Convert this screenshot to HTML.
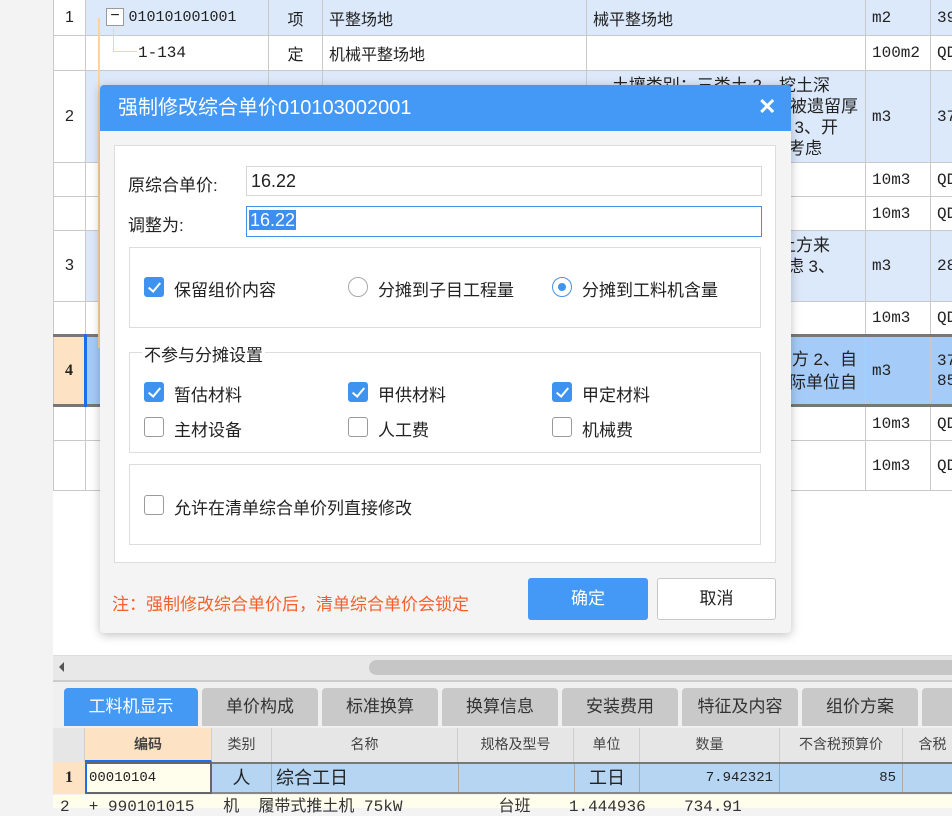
<!DOCTYPE html>
<html><head><meta charset="utf-8">
<style>
*{margin:0;padding:0;box-sizing:border-box}
body{width:952px;height:808px;overflow:hidden;background:#f3f3f3;position:relative;font-family:"Liberation Sans","Noto Sans CJK SC",sans-serif;font-size:16px;color:#222}
.a{position:absolute}
table.g{position:absolute;left:53px;top:-1px;border-collapse:collapse;table-layout:fixed;width:910px;background:#fff}
table.g td{border:1px solid #c9c9c9;padding:0 6px;font-size:16px;color:#222;white-space:nowrap;overflow:hidden;vertical-align:middle}
tr.b td{background:#dce9fb}
tr.s td{background:#a5cbf8}
td.n{text-align:center;background:#fff!important;padding:0}
.mono{font-family:"Liberation Mono","Noto Sans CJK SC",monospace;font-size:14px}
.cb{position:absolute;width:20px;height:20px;border:1px solid #9a9a9a;border-radius:3px;background:#fff}
.cb.on{background:#3f93f0;border-color:#3f93f0}
.cb.on:after{content:"";position:absolute;left:6px;top:2px;width:5px;height:10px;border:solid #fff;border-width:0 2.5px 2.5px 0;transform:rotate(40deg)}
.lb{position:absolute;font-size:17px;color:#222}
.tab{position:absolute;top:688px;height:38px;background:#c9c9c9;border-radius:4px 4px 0 0;text-align:center;line-height:38px;font-size:17px;color:#333}
.hc{position:absolute;top:728px;height:34px;border-right:1px solid #cfcfcf;text-align:center;line-height:32px;font-size:14px;color:#444;background:#e6e6e6}
.tx{padding:0!important;vertical-align:middle}
.tx div{text-align:right;line-height:21px;font-size:17px}
</style></head><body>
<div class="a" style="left:53px;top:0;width:899px;height:655px;background:#fff"></div>
<table class="g">
<colgroup><col style="width:32px"><col style="width:183px"><col style="width:54px"><col style="width:264px"><col style="width:279px"><col style="width:65px"><col style="width:33px"></colgroup>
<tr class="b" style="height:36px"><td class="n">1</td><td style="padding-left:8px"><span style="display:inline-block;width:18px;height:18px;border:1px solid #999;vertical-align:middle;text-align:center;line-height:14px;margin-left:12px;background:#fff">−</span> <span class="mono" style="font-size:15px">010101001001</span></td><td style="text-align:center">项</td><td>平整场地</td><td>械平整场地</td><td class="mono">m2</td><td class="mono">39</td></tr>
<tr style="height:35px"><td class="n"></td><td style="padding-left:52px" class="mono">1-134</td><td style="text-align:center">定</td><td>机械平整场地</td><td></td><td class="mono">100m2</td><td class="mono">QD</td></tr>
<tr class="b" style="height:92px"><td class="n">2</td><td></td><td></td><td></td><td class="tx"><div style="padding-right:35px">土壤类别：三类土 2、挖土深</div><div style="padding-right:7px">度：按设计，放坡被遗留厚</div><div style="padding-right:27px">度：综合考虑 0 &nbsp;3、开</div><div style="padding-right:43px">挖方式：综合考虑</div></td><td class="mono">m3</td><td class="mono">37</td></tr>
<tr style="height:34px"><td class="n"></td><td></td><td></td><td></td><td></td><td class="mono">10m3</td><td class="mono">QD</td></tr>
<tr style="height:34px"><td class="n"></td><td></td><td></td><td></td><td></td><td class="mono">10m3</td><td class="mono">QD</td></tr>
<tr class="b" style="height:71px"><td class="n">3</td><td></td><td></td><td></td><td class="tx"><div style="padding-right:35px">1、土方来源：综合考虑土方来</div><div style="padding-right:30px">2、运距：综合考虑考虑 3、</div><div>&nbsp;</div></td><td class="mono">m3</td><td class="mono">28</td></tr>
<tr style="height:34px"><td class="n"></td><td></td><td></td><td></td><td></td><td class="mono">10m3</td><td class="mono">QD</td></tr>
<tr class="s" style="height:70px;border-top:3px solid #777;border-bottom:3px solid #777"><td class="n" style="background:#fde3c4!important;font-weight:bold;font-family:'Liberation Serif',serif">4</td><td style="border-left:3px solid #1a6ff0"></td><td></td><td></td><td class="tx"><div style="padding-right:8px;line-height:23px">1、废弃料品种：综合考虑方 2、自</div><div style="padding-right:8px;line-height:23px">2、运距：由投标单位实际单位自</div></td><td class="mono">m3</td><td class="mono" style="line-height:20px;white-space:normal">37<br>85</td></tr>
<tr style="height:35px"><td class="n"></td><td></td><td></td><td></td><td></td><td class="mono">10m3</td><td class="mono">QD</td></tr>
<tr style="height:50px"><td class="n"></td><td></td><td></td><td></td><td></td><td class="mono">10m3</td><td class="mono">QD</td></tr>
</table>
<div class="a" style="left:98px;top:18px;width:2px;height:330px;background:#fcd3a0"></div>
<div class="a" style="left:113px;top:28px;width:1px;height:24px;background:#fcd3a0"></div>
<div class="a" style="left:113px;top:51px;width:24px;height:1px;background:#fcd3a0"></div>

<div class="a" style="left:53px;top:655px;width:899px;height:27px;background:#e8e8e8;border-top:1px solid #ddd;border-bottom:2px solid #ccc"></div>
<div class="a" style="left:59px;top:662px;width:0;height:0;border-top:5px solid transparent;border-bottom:5px solid transparent;border-right:5px solid #555"></div>
<div class="a" style="left:369px;top:660px;width:600px;height:15px;background:#c6c6c6;border-radius:8px"></div>
<div class="a" style="left:53px;top:682px;width:899px;height:46px;background:#f0f0f0"></div>
<div class="tab" style="left:64px;width:134px;background:#4499f5;color:#fff">工料机显示</div>
<div class="tab" style="left:202px;width:116px">单价构成</div>
<div class="tab" style="left:322px;width:116px">标准换算</div>
<div class="tab" style="left:442px;width:116px">换算信息</div>
<div class="tab" style="left:562px;width:116px">安装费用</div>
<div class="tab" style="left:682px;width:116px">特征及内容</div>
<div class="tab" style="left:802px;width:116px">组价方案</div>
<div class="tab" style="left:922px;width:40px"></div>
<div class="a" style="left:53px;top:728px;width:899px;height:34px;background:#e6e6e6;border-bottom:1px solid #cfcfcf"></div>
<div class="hc" style="left:53px;width:32px"></div>
<div class="hc" style="left:85px;width:127px;background:#fde3c4;font-weight:bold;border-bottom:2px solid #1a6ff0">编码</div>
<div class="hc" style="left:212px;width:60px">类别</div>
<div class="hc" style="left:272px;width:186px">名称</div>
<div class="hc" style="left:458px;width:116px">规格及型号</div>
<div class="hc" style="left:574px;width:66px">单位</div>
<div class="hc" style="left:640px;width:140px">数量</div>
<div class="hc" style="left:780px;width:123px">不含税预算价</div>
<div class="hc" style="left:903px;width:60px">含税</div>
<div class="a" style="left:53px;top:762px;width:899px;height:32px;background:#b5d5f3;border-top:2px solid #777;border-bottom:2px solid #888"></div>
<div class="a" style="left:53px;top:762px;width:32px;height:32px;background:#fde3c4;text-align:center;line-height:32px;font-family:'Liberation Serif',serif;font-weight:bold;font-size:16px">1</div>
<div class="a mono" style="left:85px;top:762px;width:127px;height:32px;background:#fffdeb;border:2px solid #666;border-left:2px solid #1a6ff0;line-height:28px;padding-left:2px">00010104</div>
<div class="a" style="left:212px;top:764px;width:60px;height:28px;text-align:center;line-height:28px;font-size:18px;border-right:1px solid #aaa">人</div>
<div class="a" style="left:276px;top:764px;line-height:28px;font-size:18px">综合工日</div>
<div class="a" style="left:458px;top:764px;width:1px;height:28px;background:#aaa"></div>
<div class="a" style="left:574px;top:764px;width:66px;height:28px;text-align:center;line-height:28px;font-size:18px;border-left:1px solid #aaa;border-right:1px solid #aaa">工日</div>
<div class="a mono" style="left:640px;top:764px;width:140px;height:28px;text-align:right;line-height:28px;padding-right:6px;border-right:1px solid #aaa">7.942321</div>
<div class="a mono" style="left:780px;top:764px;width:123px;height:28px;text-align:right;line-height:28px;padding-right:6px;border-right:1px solid #aaa">85</div>
<div class="a" style="left:53px;top:795px;width:899px;height:13px;background:#fffdeb"></div>
<div class="a mono" style="left:60px;top:799px;font-size:16px;line-height:16px;color:#333">2 &nbsp;+ 990101015 &nbsp;&nbsp;机 &nbsp;履带式推土机 75kW &nbsp;&nbsp;&nbsp;&nbsp;&nbsp;&nbsp;&nbsp;&nbsp;&nbsp;台班 &nbsp;&nbsp;&nbsp;1.444936 &nbsp;&nbsp;&nbsp;734.91</div>

<div class="a" style="left:100px;top:85px;width:691px;height:548px;background:#f4f4f4;border-radius:4px;box-shadow:0 2px 10px rgba(0,0,0,.25);overflow:hidden">
 <div class="a" style="left:0;top:0;width:691px;height:46px;background:#4599f6"></div>
 <div class="a" style="left:18px;top:10px;color:#fff;font-size:20px;line-height:26px">强制修改综合单价010103002001</div>
 <div class="a" style="left:658px;top:8px;color:#fff;font-size:22px;font-weight:bold;line-height:28px">✕</div>
 <div class="a" style="left:14px;top:60px;width:662px;height:418px;background:#fff;border:1px solid #ddd"></div>
 <div class="lb" style="left:28px;top:86px">原综合单价:</div>
 <div class="a" style="left:146px;top:81px;width:516px;height:30px;border:1px solid #d6d6d6;background:#fff;font-size:18px;line-height:28px;padding-left:4px">16.22</div>
 <div class="lb" style="left:28px;top:126px">调整为:</div>
 <div class="a" style="left:146px;top:121px;width:516px;height:31px;border:1.5px solid #4a90e8;background:#fff;font-size:18px;line-height:27px;padding-left:2px"><span style="background:#3d8ef0;color:#fff;padding:0 1px">16.22</span></div>
 <div class="a" style="left:29px;top:162px;width:632px;height:81px;border:1px solid #ddd"></div>
 <div class="cb on" style="left:44px;top:192px"></div><div class="lb" style="left:74px;top:191px">保留组价内容</div>
 <div class="a" style="left:248px;top:192px;width:20px;height:20px;border:1px solid #aaa;border-radius:50%;background:#fff"></div><div class="lb" style="left:278px;top:191px">分摊到子目工程量</div>
 <div class="a" style="left:452px;top:192px;width:20px;height:20px;border:1px solid #4a90e8;border-radius:50%;background:#fff"><div class="a" style="left:5px;top:5px;width:8px;height:8px;border-radius:50%;background:#3f93f0"></div></div><div class="lb" style="left:482px;top:191px">分摊到工料机含量</div>
 <div class="a" style="left:29px;top:267px;width:632px;height:101px;border:1px solid #ddd"></div>
 <div class="lb" style="left:42px;top:256px;background:#fff;padding:0 2px">不参与分摊设置</div>
 <div class="cb on" style="left:44px;top:297px"></div><div class="lb" style="left:74px;top:296px">暂估材料</div>
 <div class="cb on" style="left:248px;top:297px"></div><div class="lb" style="left:278px;top:296px">甲供材料</div>
 <div class="cb on" style="left:452px;top:297px"></div><div class="lb" style="left:482px;top:296px">甲定材料</div>
 <div class="cb" style="left:44px;top:332px"></div><div class="lb" style="left:74px;top:331px">主材设备</div>
 <div class="cb" style="left:248px;top:332px"></div><div class="lb" style="left:278px;top:331px">人工费</div>
 <div class="cb" style="left:452px;top:332px"></div><div class="lb" style="left:482px;top:331px">机械费</div>
 <div class="a" style="left:29px;top:379px;width:632px;height:81px;border:1px solid #ddd"></div>
 <div class="cb" style="left:44px;top:410px"></div><div class="lb" style="left:74px;top:409px">允许在清单综合单价列直接修改</div>
 <div class="a" style="left:12px;top:505px;color:#f5602a;font-size:17px">注：强制修改综合单价后，清单综合单价会锁定</div>
 <div class="a" style="left:428px;top:493px;width:120px;height:42px;background:#4599f6;border-radius:3px;color:#fff;text-align:center;line-height:42px;font-size:17px">确定</div>
 <div class="a" style="left:557px;top:493px;width:119px;height:42px;background:#fff;border:1px solid #c8c8c8;border-radius:3px;color:#222;text-align:center;line-height:40px;font-size:17px">取消</div>
</div>
</body></html>
